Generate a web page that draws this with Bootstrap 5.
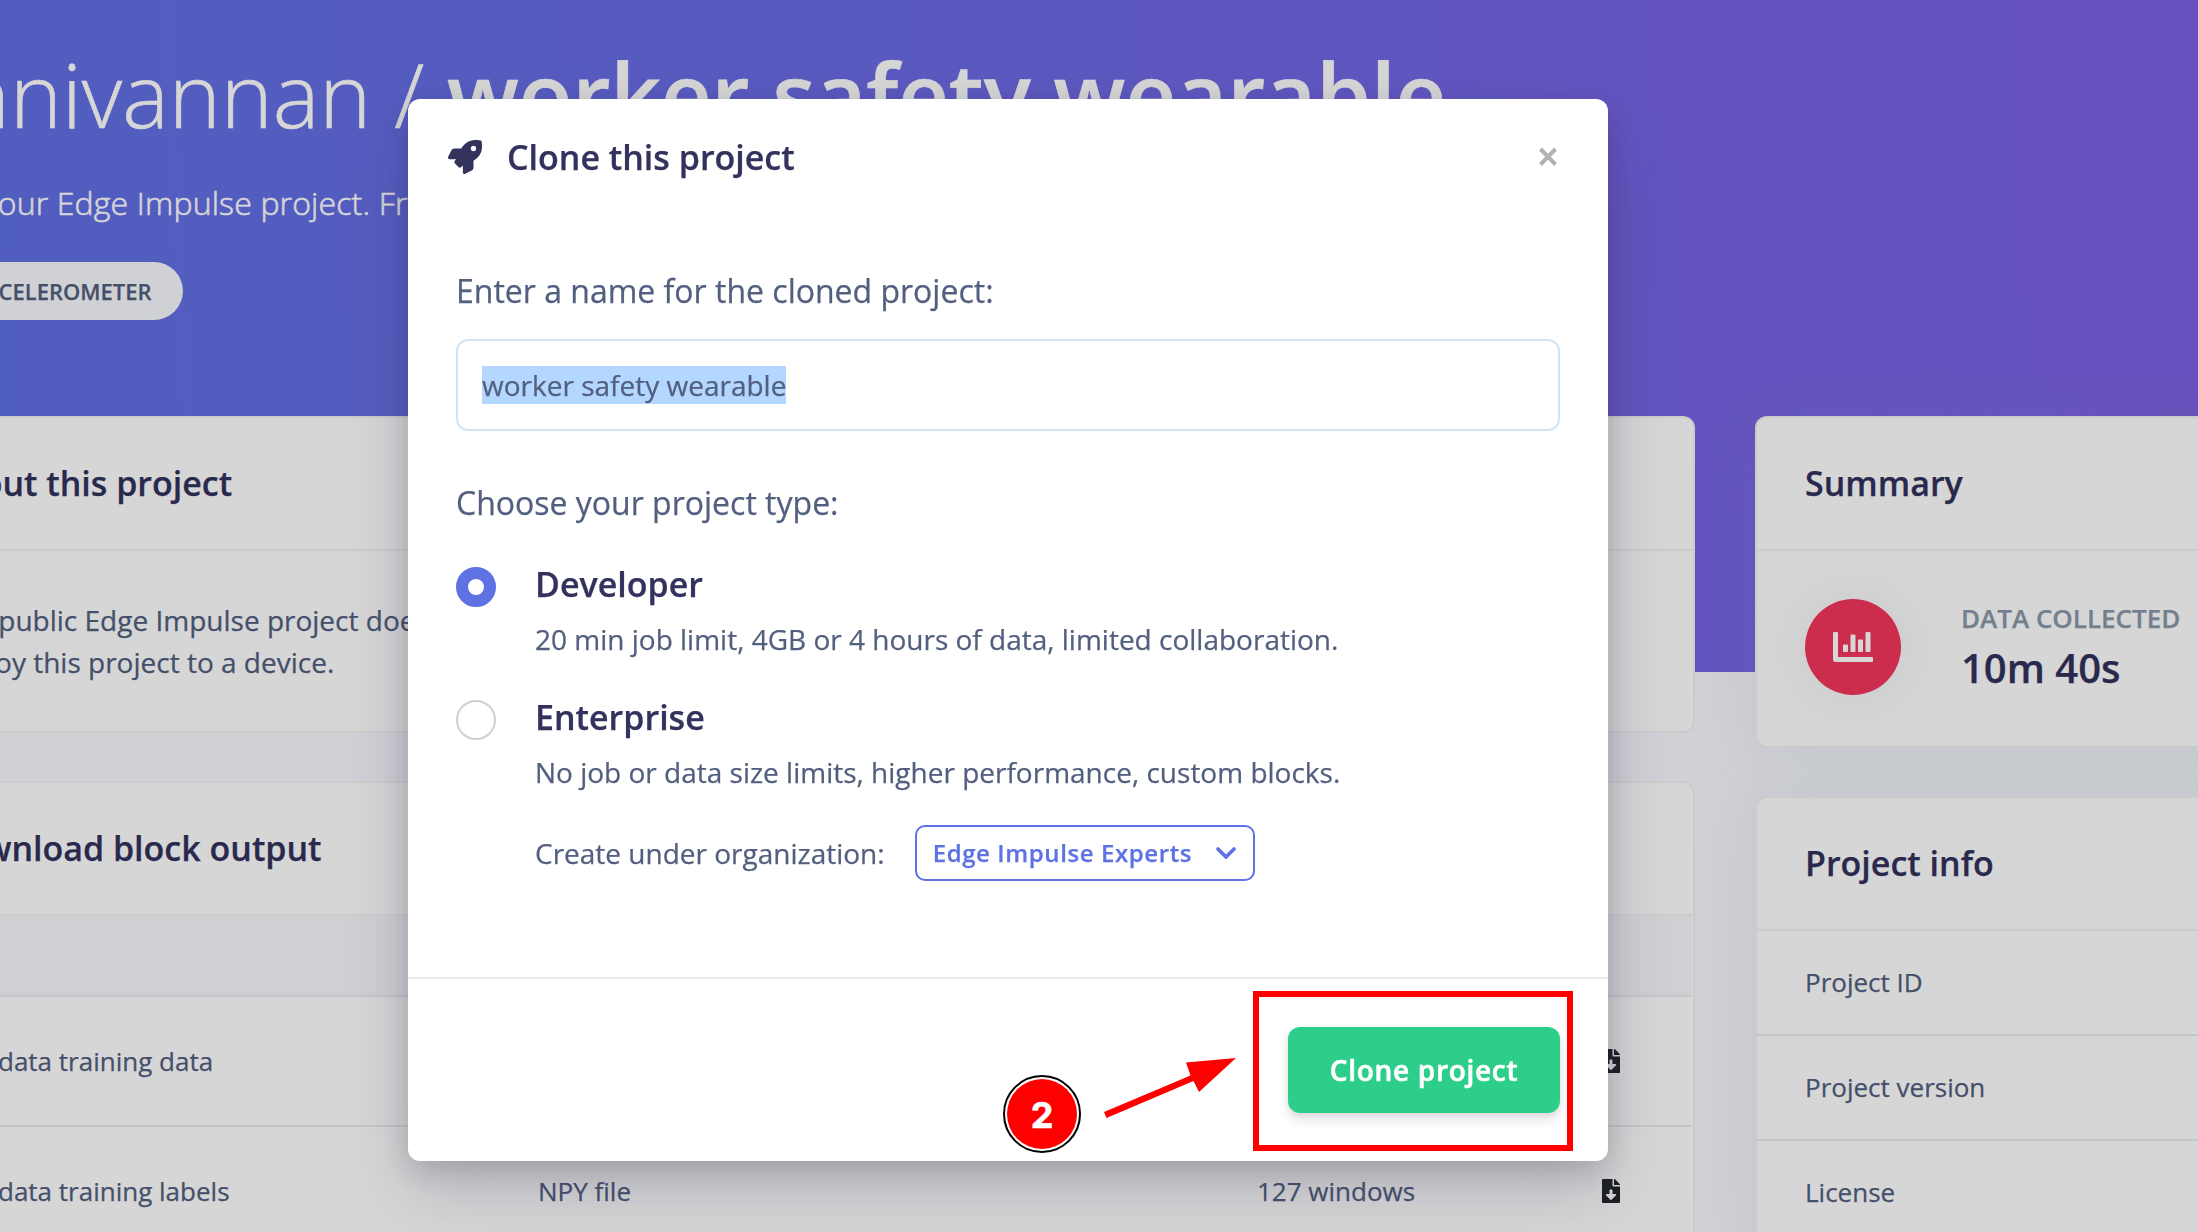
<!DOCTYPE html>
<html lang="en">
<head>
<meta charset="utf-8">
<meta name="viewport" content="width=device-width, initial-scale=1">
<title>Clone this project</title>
<link href="https://cdn.jsdelivr.net/npm/bootstrap@5.3.0/dist/css/bootstrap.min.css" rel="stylesheet">
<style>
  html, body { height: 100%; overflow: hidden; }
  body { font-family: "Open Sans", sans-serif; font-size: 28px; line-height: 42px; color: #525f7f; background: #f8f9fe; -webkit-text-stroke: .25px currentColor; }
  h1, h2, h3, p { margin: 0; }
  h2, h3 { font-size: 34px; line-height: 50px; font-weight: 600; color: #32325d; }

  .page-view { height: 1232px; }
  .hero { height: 672px; padding-top: 44px; background: linear-gradient(87deg, #5e72e4 0, #825ee4 100%); width: 2750px; margin-left: -150px; padding-left: 150px; color: #fff; -webkit-text-stroke: .6px currentColor; }
  .hero h1 { font-size: 88px; line-height: 100px; font-weight: 300; margin-left: -42px; }
  .hero h1 strong { font-weight: 600; }
  .hero-note { font-size: 32px; line-height: 48px; font-weight: 300; letter-spacing: .16px; margin: 35px 0 35px -115px; }
  .tag-pill { height: 58px; padding: 0 31px 0 33px; margin-left: -63px; border-radius: 29px; background: #f8f9fe; color: #525f7f; font-size: 22px; font-weight: 600; -webkit-text-stroke: .25px currentColor; }

  .columns { margin: -256px 0 0 -113px; gap: 60px; }
  .col-main { width: 1808px; }
  .col-side { width: 620px; }
  .panel { border: 2px solid rgba(0,0,0,.05); border-radius: 12px; background: #fff; background-clip: border-box; margin-bottom: 48px; color: inherit; }
  .col-side .panel { box-shadow: 0 0 64px rgba(136,152,170,.15); }
  .panel-head { height: 133px; padding: 0 48px 2px; border-bottom: 2px solid rgba(0,0,0,.05); }
  .col-main .panel-head, .col-main .panel-body { padding-left: 49px; }
  .panel-body { padding: 48px; }
  .stat-disc { width: 96px; height: 96px; background: #f5365c; box-shadow: 0 0 64px rgba(136,152,170,.15); }
  .stat-name { font-size: 26px; line-height: 38px; font-weight: 600; color: #8898aa; }
  .stat-value { font-size: 40px; line-height: 61px; font-weight: 600; color: #32325d; }

  .files { width: 1802px; table-layout: fixed; font-size: 26px; color: #525f7f; --bs-table-color: #525f7f; margin: 0; }
  .files > :not(caption) > * > * { border: 0; border-bottom: 2px solid #e9ecef; padding: 0 50px; height: 130px; color: inherit; }
  .files > thead > tr > th { height: 80px; background: #f7f8fc; }
  .files td:first-child { padding-left: 109px; }
  .info-row { height: 105px; padding: 0 48px 2px; font-size: 26px; border-bottom: 2px solid #e9ecef; }

  .modal-backdrop { --bs-backdrop-opacity: .16; }
  .modal { --bs-modal-width: 1200px; overflow: hidden; }
  .modal-dialog { margin: 99px 0 0 408px; }
  .modal-content { height: 1062px; border: 0; border-radius: 12px; color: #525f7f; box-shadow: 0 30px 70px rgba(50,50,93,.2), 0 10px 30px rgba(0,0,0,.17); }
  .modal-header { height: 116px; padding: 0 50px 0 40px; border: 0; }
  .modal-header h2 { margin-left: 25px; }
  .modal-body { padding: 52px 48px 0; }
  .modal-footer { height: 184px; padding: 0 48px; border-top: 2px solid #e9ecef; }
  .modal-footer > * { margin: 0; }
  .field-label { font-size: 32px; line-height: 48px; }
  .name-field { height: 92px; margin: 24px 0 48px; padding: 0 24px; border: 2px solid #cfe5f5; border-radius: 12px; font-size: 28px; color: #525f7f; }
  .picked { background: #b3d7ff; line-height: 38px; }
  .choice { gap: 39px; margin-top: 32px; }
  .choice h3 { margin-bottom: 9px; }
  .dial { width: 40px; height: 40px; margin-top: 8px; border: 2px solid #cad1d7; border-radius: 50%; background: #fff; }
  .dial.on { border: 12px solid #5e72e4; }
  .org-row { margin-top: 32px; gap: 30px; }
  .org-pick { width: 340px; height: 56px; padding: 0 17px 0 16px; border: 2px solid #5e72e4; border-radius: 10px; color: #5e72e4; font-size: 24px; font-weight: 600; letter-spacing: .025em; }
  .btn-clone { width: 272px; height: 86px; border: 0; border-radius: 12px; background: #2dce89; color: #fff; font-size: 28px; font-weight: 600; letter-spacing: .025em; -webkit-text-stroke: .6px currentColor; box-shadow: 0 8px 12px rgba(50,50,93,.11), 0 2px 6px rgba(0,0,0,.08); }

  /* annotation layer over the dialog */
  .marks { z-index: 1100; pointer-events: none; }
  .frame-mark { left: 1253px; top: 991px; width: 320px; height: 160px; border: 6px solid #f00; }
  .step-mark { left: 1003px; top: 1075px; width: 78px; height: 78px; border: 2px solid #000; border-radius: 50%; background: #fff; padding: 2px; }
  .step-mark span { border-radius: 50%; background: #f00; color: #fff; font: 700 36px/1 Inter, sans-serif; padding-top: 1px; -webkit-text-stroke: .6px currentColor; }
  .arrow-mark { left: 1100px; top: 1050px; }
</style>
<script src="https://cdn.jsdelivr.net/npm/bootstrap@5.3.0/dist/js/bootstrap.bundle.min.js"></script>
</head>
<body>
<div class="page-view overflow-hidden">
  <header class="hero">
    <h1 class="text-nowrap">nnivannan / <strong>worker safety wearable</strong></h1>
    <p class="hero-note text-nowrap">This is your Edge Impulse project. From</p>
    <div class="tag-pill d-inline-flex align-items-center">ACCELEROMETER</div>
  </header>
  <main class="columns d-flex">
    <div class="col-main flex-shrink-0">
      <section class="card panel">
        <div class="panel-head d-flex align-items-center"><h2>About this project</h2></div>
        <div class="panel-body">This public Edge Impulse project does<br>deploy this project to a device.</div>
      </section>
      <section class="card panel">
        <div class="panel-head d-flex align-items-center"><h2>Download block output</h2></div>
        <table class="table files align-middle">
          <colgroup><col style="width:599px"><col style="width:719px"><col style="width:345px"><col></colgroup>
          <thead><tr><th></th><th></th><th></th><th></th></tr></thead>
          <tbody>
            <tr><td>data training data</td><td></td><td></td><td><svg class="d-block" width="18" height="24" viewBox="0 0 384 512" fill="#212529"><path d="M224 136V0H24C10.7 0 0 10.7 0 24v464c0 13.3 10.7 24 24 24h336c13.3 0 24-10.7 24-24V160H248c-13.2 0-24-10.8-24-24zm76.45 211.36l-96.42 95.7c-6.65 6.61-17.39 6.61-24.04 0l-96.42-95.7C73.42 337.29 80.54 320 94.82 320H160v-80c0-8.84 7.16-16 16-16h32c8.84 0 16 7.16 16 16v80h65.18c14.28 0 21.4 17.29 11.27 27.36zM377 105L279.1 7c-4.5-4.5-10.6-7-17-7H256v128h128v-6.1c0-6.3-2.5-12.4-7-16.9z"/></svg></td></tr>
            <tr><td>data training labels</td><td>NPY file</td><td>127 windows</td><td><svg class="d-block" width="18" height="24" viewBox="0 0 384 512" fill="#212529"><path d="M224 136V0H24C10.7 0 0 10.7 0 24v464c0 13.3 10.7 24 24 24h336c13.3 0 24-10.7 24-24V160H248c-13.2 0-24-10.8-24-24zm76.45 211.36l-96.42 95.7c-6.65 6.61-17.39 6.61-24.04 0l-96.42-95.7C73.42 337.29 80.54 320 94.82 320H160v-80c0-8.84 7.16-16 16-16h32c8.84 0 16 7.16 16 16v80h65.18c14.28 0 21.4 17.29 11.27 27.36zM377 105L279.1 7c-4.5-4.5-10.6-7-17-7H256v128h128v-6.1c0-6.3-2.5-12.4-7-16.9z"/></svg></td></tr>
          </tbody>
        </table>
      </section>
    </div>
    <aside class="col-side flex-shrink-0">
      <section class="card panel">
        <div class="panel-head d-flex align-items-center"><h2>Summary</h2></div>
        <div class="panel-body d-flex">
          <div class="stat-disc rounded-circle d-flex align-items-center justify-content-center me-5">
            <svg width="40" height="40" viewBox="0 0 512 512" fill="#fff"><path d="M332.8 320h38.4c6.4 0 12.8-6.4 12.8-12.8V172.8c0-6.4-6.4-12.8-12.8-12.8h-38.4c-6.4 0-12.8 6.4-12.8 12.8v134.4c0 6.4 6.4 12.8 12.8 12.8zm96 0h38.4c6.4 0 12.8-6.4 12.8-12.8V76.8c0-6.4-6.4-12.8-12.8-12.8h-38.4c-6.4 0-12.8 6.4-12.8 12.8v230.4c0 6.4 6.4 12.8 12.8 12.8zm-288 0h38.4c6.4 0 12.8-6.4 12.8-12.8v-70.4c0-6.4-6.4-12.8-12.8-12.8h-38.4c-6.4 0-12.8 6.4-12.8 12.8v70.4c0 6.4 6.4 12.8 12.8 12.8zm96 0h38.4c6.4 0 12.8-6.4 12.8-12.8V108.8c0-6.4-6.4-12.8-12.8-12.8h-38.4c-6.4 0-12.8 6.4-12.8 12.8v198.4c0 6.4 6.4 12.8 12.8 12.8zM496 384H64V80c0-8.84-7.16-16-16-16H16C7.16 64 0 71.16 0 80v336c0 17.67 14.33 32 32 32h464c8.84 0 16-7.16 16-16v-32c0-8.84-7.16-16-16-16z"/></svg>
          </div>
          <div class="ps-2 ms-1">
            <div class="stat-name">DATA COLLECTED</div>
            <div class="stat-value">10m 40s</div>
          </div>
        </div>
      </section>
      <section class="card panel">
        <div class="panel-head d-flex align-items-center"><h2>Project info</h2></div>
        <div class="info-row d-flex align-items-center">Project ID</div>
        <div class="info-row d-flex align-items-center">Project version</div>
        <div class="info-row d-flex align-items-center">License</div>
      </section>
    </aside>
  </main>
</div>

<div class="modal-backdrop show"></div>
<div class="modal d-block" role="dialog">
  <div class="modal-dialog">
    <div class="modal-content">
      <div class="modal-header d-flex align-items-center">
        <svg width="34" height="34" viewBox="0 0 512 512" fill="#32325d"><path d="M505.12 19.094c-1.19-5.531-6.658-11-12.207-12.188C460.716 0 435.507 0 410.407 0 307.175 0 245.269 55.203 199.052 128H94.838c-16.348.016-35.557 11.875-42.887 26.484L2.516 253.297A28.4 28.4 0 0 0 0 264a24.009 24.009 0 0 0 24.006 24h103.81l-22.474 22.469c-11.366 11.361-12.997 32.258 0 45.25l50.904 50.906c11.156 11.188 32.156 13.156 45.277 0l22.475-22.469V488a24.009 24.009 0 0 0 24.006 24 28.56 28.56 0 0 0 10.707-2.516l98.728-49.39c14.629-7.297 26.508-26.5 26.508-42.86V312.797c72.598-46.313 128.035-108.406 128.035-211.094.093-25.203.093-50.406-6.862-82.609zM384.04 168A40 40 0 1 1 424.05 128a40.023 40.023 0 0 1-40.01 40z"/></svg>
        <h2 class="me-auto">Clone this project</h2>
        <svg width="20" height="20" viewBox="0 0 20 20" stroke="#b2b2b2" stroke-width="4"><path d="M2.500 2l15 15.500M17.500 2l-15 15.500"/></svg>
      </div>
      <div class="modal-body">
        <div class="field-label">Enter a name for the cloned project:</div>
        <div class="form-control name-field d-flex align-items-center"><span class="picked">worker safety wearable</span></div>
        <div class="field-label">Choose your project type:</div>
        <div class="choice d-flex">
          <div class="dial on flex-shrink-0"></div>
          <div>
            <h3>Developer</h3>
            <p>20 min job limit, 4GB or 4 hours of data, limited collaboration.</p>
          </div>
        </div>
        <div class="choice d-flex">
          <div class="dial flex-shrink-0"></div>
          <div>
            <h3>Enterprise</h3>
            <p>No job or data size limits, higher performance, custom blocks.</p>
            <div class="org-row d-flex align-items-center">
              <span>Create under organization:</span>
              <div class="org-pick d-flex align-items-center justify-content-between">
                <span>Edge Impulse Experts</span>
                <svg width="20" height="12" viewBox="0 0 20 12" fill="none" stroke="#5e72e4" stroke-width="3.600" stroke-linecap="round"><path d="M2 2l8 8 8-8"/></svg>
              </div>
            </div>
          </div>
        </div>
      </div>
      <div class="modal-footer d-flex align-items-center justify-content-end">
        <button class="btn btn-clone p-0" type="button">Clone project</button>
      </div>
    </div>
  </div>
</div>

<div class="marks position-fixed top-0 start-0">
  <div class="frame-mark position-absolute"></div>
  <div class="step-mark position-absolute d-flex"><span class="flex-fill d-flex align-items-center justify-content-center">2</span></div>
  <svg class="arrow-mark position-absolute" width="140" height="70" viewBox="1100 1050 140 70" fill="#f00"><path d="M1104 1112L1190.500 1075.500L1186 1062.500L1236 1058L1199 1092L1193.500 1081L1106.500 1118z"/></svg>
</div>
</body>
</html>
